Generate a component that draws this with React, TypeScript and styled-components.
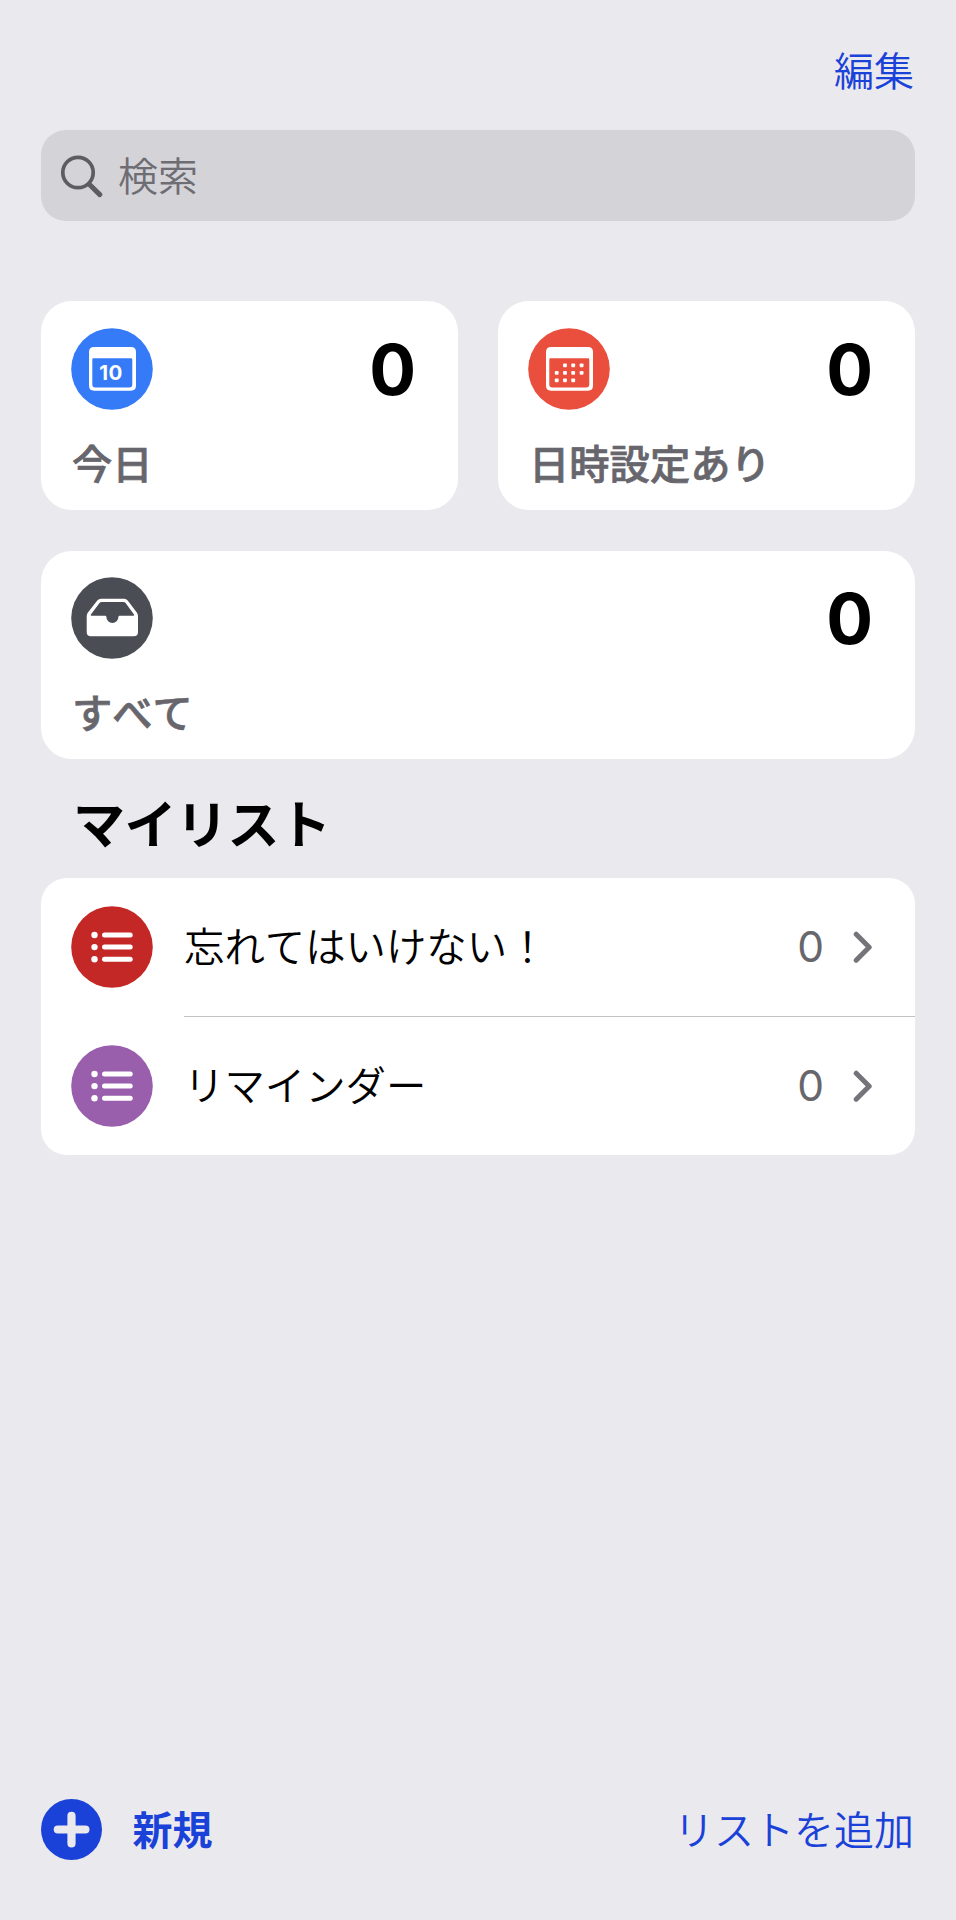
import React from "react";
import styled, { createGlobalStyle } from "styled-components";

const GlobalStyle = createGlobalStyle`
  *, *::before, *::after { box-sizing: border-box; }
  body {
    margin: 0;
    background: #eae9ee;
    font-family: Inter, "Noto Sans CJK JP", sans-serif;
    font-kerning: none;
  }
  button { font: inherit; font-kerning: none; color: inherit; background: none; border: 0; padding: 0; }
  h2, p { margin: 0; }
  svg { display: block; flex: none; }
`;

const Screen = styled.main`
  display: flex;
  flex-direction: column;
  width: 956px;
  height: 1920px;
  padding: 40px 41px 60px;
  background: #eae9ee;
  color: #000;
`;

const TopBar = styled.header`
  display: flex;
  justify-content: flex-end;
  height: 90px;
`;

const TextButton = styled.button<{ $bold?: boolean }>`
  height: 62px;
  padding: 2px 1px 0 0;
  font-size: 40px;
  line-height: 60px;
  font-weight: ${(p) => (p.$bold ? 600 : 350)};
  color: #1a41d8;
  white-space: nowrap;
`;

const SearchField = styled.div`
  display: flex;
  align-items: center;
  gap: 15px;
  height: 91px;
  padding-left: 18px;
  border-radius: 25px;
  background: #d4d3d8;
`;

const Placeholder = styled.span`
  padding-top: 2px;
  color: #6e6d73;
  font-size: 40px;
  font-weight: 350;
  line-height: 60px;
`;

const CardGrid = styled.section`
  display: grid;
  grid-template-columns: 417px 417px;
  grid-auto-rows: 208.5px;
  gap: 41px 40px;
  margin-top: 80px;
`;

const Card = styled.article<{ $wide?: boolean }>`
  display: flex;
  flex-direction: column;
  justify-content: space-between;
  grid-column: ${(p) => (p.$wide ? "1 / -1" : "auto")};
  padding: 26.6px 42px 15px 30px;
  border-radius: 31px;
  background: #fff;
`;

const CardTop = styled.div`
  display: flex;
  justify-content: space-between;
  align-items: center;
  height: 82px;
`;

const CardCount = styled.span`
  padding-top: 2px;
  font-size: 69.5px;
  line-height: 82px;
  font-weight: 700;
`;

const CardLabel = styled.p`
  padding-left: 1px;
  font-size: 40.3px;
  line-height: 60px;
  font-weight: 500;
  -webkit-text-stroke: 0.7px currentColor;
  color: #67666c;
`;

const SectionTitle = styled.h2`
  height: 80px;
  margin: 27px 0 12px;
  padding-left: 32px;
  font-size: 52px;
  line-height: 80px;
  font-weight: 700;
  letter-spacing: -0.5px;
`;

const ListPanel = styled.section`
  flex: none;
  height: 277px;
  border-radius: 26px;
  background: #fff;
  overflow: hidden;
`;

const ListRow = styled.div`
  display: flex;
  align-items: center;
  gap: 31px;
  height: 138px;
  padding-left: 30px;
`;

const RowDivider = styled.hr`
  height: 1px;
  margin: 0 0 0 143px;
  border: 0;
  background: #c2c2c5;
`;

const RowName = styled.span`
  flex: 1;
  padding-top: 2px;
  font-size: 40.4px;
  line-height: 60px;
  font-weight: 350;
`;

const RowCount = styled.span`
  font-size: 42.5px;
  line-height: 60px;
  color: #67666c;
`;

const RowEnd = styled.div`
  display: flex;
  align-items: center;
  gap: 29px;
  padding-right: 42px;
`;

const Footer = styled.footer`
  display: flex;
  align-items: center;
  justify-content: space-between;
  height: 61px;
  margin-top: auto;
`;

const NewItem = styled.div`
  display: flex;
  align-items: center;
  gap: 30.5px;
`;

const Disc = ({ color, children }: { color: string; children: React.ReactNode }) => (
  <svg width="82" height="82" viewBox="0 0 82 82">
    <circle cx="41" cy="41" r="40.8" fill={color} />
    {children}
  </svg>
);

const CalendarFrame = () => (
  <path
    fill="#fff"
    fillRule="evenodd"
    d="M23 19H60Q65 19 65 24V57.5Q65 62.7 60 62.7H23Q18 62.7 18 57.5V24Q18 19 23 19ZM22.5 30.3Q21.3 30.3 21.3 31.5V56.5Q21.3 59.5 24.3 59.5H58.3Q61.3 59.5 61.3 56.5V31.5Q61.3 30.3 60.1 30.3Z"
  />
);

const TodayIcon = () => (
  <Disc color="#357af6">
    <CalendarFrame />
    <text x="39.9" y="52.4" textAnchor="middle" fontSize="20.5" fontWeight="700" letterSpacing="0.4" fill="#fff">
      10
    </text>
  </Disc>
);

const DOTS: [number, number][] = [
  [37, 37.3], [45.2, 37.3], [53.6, 37.3],
  [28.7, 44.8], [37, 44.8], [45.2, 44.8], [53.6, 44.8],
  [28.7, 52.3], [37, 52.3], [45.2, 52.3],
];

const ScheduledIcon = () => (
  <Disc color="#ea4f3d">
    <CalendarFrame />
    {DOTS.map(([x, y]) => (
      <rect key={`${x}-${y}`} x={x - 1.9} y={y - 1.9} width="3.8" height="3.8" rx="0.9" fill="#fff" />
    ))}
  </Disc>
);

const AllIcon = () => (
  <Disc color="#4b4d55">
    <path
      fill="#fff"
      fillRule="evenodd"
      d="M30 21.7H53Q55.3 21.7 56.7 23.6L65.8 35.6Q67 37.2 67 39V55Q67 59.3 62.7 59.3H20Q15.7 59.3 15.7 55V39Q15.7 37.2 16.9 35.6L26.3 23.6Q27.7 21.7 30 21.7ZM30.6 25Q29.3 25 28.5 26L19.9 37.6Q19.2 38.7 20.4 38.7H34.2Q35.3 38.7 35.4 40A6 6 0 0 0 47.4 40Q47.5 38.7 48.6 38.7H62.5Q63.7 38.7 63 37.6L54.6 26Q53.8 25 52.5 25Z"
    />
  </Disc>
);

const BulletsIcon = ({ color }: { color: string }) => (
  <Disc color={color}>
    {[29, 41.1, 53.2].map((y) => (
      <g key={y}>
        <circle cx="23.5" cy={y} r="3.2" fill="#fff" />
        <path d={`M33.5 ${y}H59.2`} stroke="#fff" strokeWidth="5" strokeLinecap="round" />
      </g>
    ))}
  </Disc>
);

const SearchIcon = () => (
  <svg width="44" height="44" viewBox="0 0 44 44" fill="none" stroke="#5d5c62" strokeLinecap="round">
    <circle cx="19" cy="18.5" r="15.2" strokeWidth="3.7" />
    <path d="M30.5 30.5L40.8 40.6" strokeWidth="5" />
  </svg>
);

const Chevron = () => (
  <svg width="20" height="32" viewBox="0 0 20 32" fill="none">
    <path d="M3.2 3.2L16.2 16.2L3.2 29.2" stroke="#75747a" strokeWidth="5" strokeLinecap="round" strokeLinejoin="round" />
  </svg>
);

const PlusIcon = () => (
  <svg width="61" height="61" viewBox="0 0 61 61">
    <circle cx="30.5" cy="30.5" r="30.5" fill="#1a41d8" />
    <path d="M16.8 30.5H44.4M30.5 16.8V44.4" stroke="#eae9ee" strokeWidth="8.2" strokeLinecap="round" />
  </svg>
);

type SummaryProps = { icon: React.ReactNode; label: string; count: number; wide?: boolean };

const Summary = ({ icon, label, count, wide }: SummaryProps) => (
  <Card $wide={wide}>
    <CardTop>
      {icon}
      <CardCount>{count}</CardCount>
    </CardTop>
    <CardLabel>{label}</CardLabel>
  </Card>
);

const ReminderList = ({ color, name, count }: { color: string; name: string; count: number }) => (
  <ListRow>
    <BulletsIcon color={color} />
    <RowName>{name}</RowName>
    <RowEnd>
      <RowCount>{count}</RowCount>
      <Chevron />
    </RowEnd>
  </ListRow>
);

export default function App() {
  return (
    <Screen lang="ja">
      <GlobalStyle />
      <TopBar>
        <TextButton>編集</TextButton>
      </TopBar>
      <SearchField>
        <SearchIcon />
        <Placeholder>検索</Placeholder>
      </SearchField>
      <CardGrid>
        <Summary icon={<TodayIcon />} label="今日" count={0} />
        <Summary icon={<ScheduledIcon />} label="日時設定あり" count={0} />
        <Summary icon={<AllIcon />} label="すべて" count={0} wide />
      </CardGrid>
      <SectionTitle>マイリスト</SectionTitle>
      <ListPanel>
        <ReminderList color="#c32826" name="忘れてはいけない！" count={0} />
        <RowDivider />
        <ReminderList color="#995eac" name="リマインダー" count={0} />
      </ListPanel>
      <Footer>
        <NewItem>
          <PlusIcon />
          <TextButton $bold>新規</TextButton>
        </NewItem>
        <TextButton>リストを追加</TextButton>
      </Footer>
    </Screen>
  );
}
